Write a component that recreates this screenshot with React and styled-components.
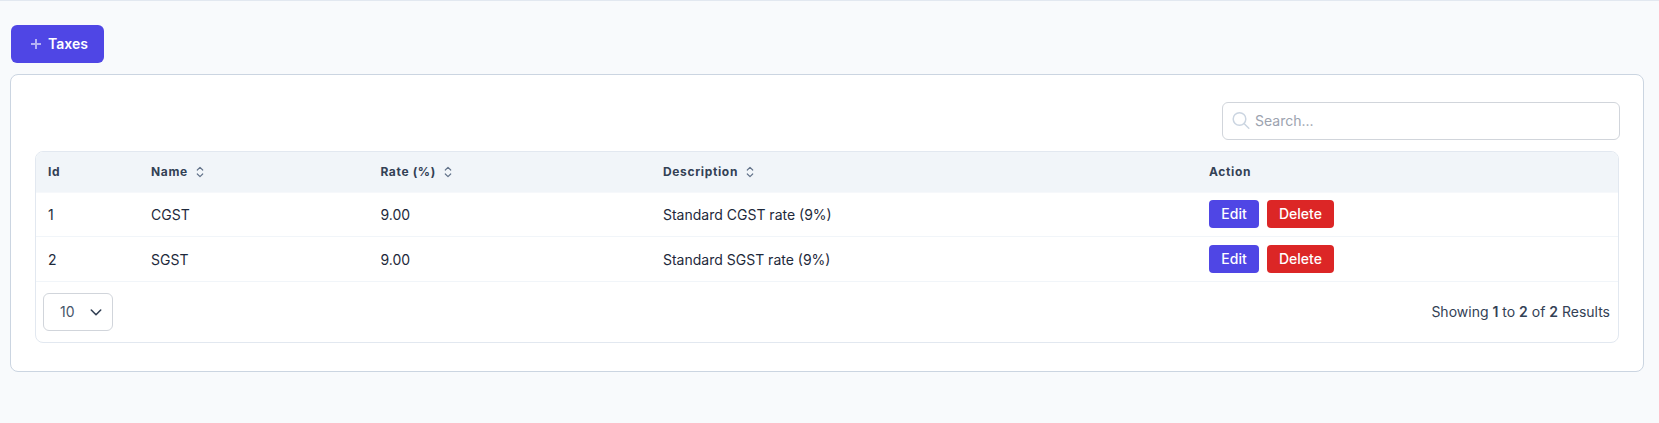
import React from 'react';
import styled, { createGlobalStyle, css } from 'styled-components';

const Global = createGlobalStyle`
  *, *::before, *::after { box-sizing: border-box; }
  body {
    margin: 0;
    background: #f8fafc;
    color: #1e293b;
    font-family: Inter, "Liberation Sans", sans-serif;
    font-size: 14px;
    line-height: 20px;
  }
  button, input { font: inherit; }
`;

const Page = styled.main`
  min-height: 423px;
  padding: 24px 15px 0 10px;
  border-top: 1px solid #e2e8f0;
`;

const AddButton = styled.button`
  display: flex;
  align-items: center;
  gap: 7px;
  width: 93px;
  height: 38px;
  margin: 0 0 11px 1px;
  padding: 0 0 0 20px;
  border: 0;
  border-radius: 6px;
  background: #4f46e5;
  color: #fff;
  font-weight: 570;
`;

const Card = styled.section`
  height: 298px;
  padding: 27px 23px 0 24px;
  border: 1px solid #cbd5e1;
  border-radius: 8px;
  background: #fff;
`;

const Toolbar = styled.div`
  display: flex;
  justify-content: flex-end;
`;

const SearchBox = styled.label`
  display: flex;
  align-items: center;
  gap: 4px;
  width: 398px;
  height: 38px;
  padding: 0 9px 0 8px;
  border: 1px solid #d1d5db;
  border-radius: 6px;
  color: #cbd5e1;
`;

const SearchInput = styled.input`
  flex: 1;
  padding: 0;
  border: 0;
  outline: 0;
  background: transparent;
  &::placeholder { color: #9ca3af; opacity: 1; }
`;

const Panel = styled.div`
  height: 192px;
  margin: 11px 1px 0 0;
  border: 1px solid #e2e8f0;
  border-radius: 8px;
  overflow: hidden;
`;

const grid = css`
  display: grid;
  grid-template-columns: 103px 229.4px 282.6px 546px 1fr;
  align-items: center;
  & > * { padding-left: 12px; }
`;

const HeadRow = styled.div`
  ${grid}
  height: 40px;
  background: #f1f5f9;
  box-shadow: 0 1px #f6f8fb;
  color: #334155;
  font-size: 12px;
  line-height: 16px;
  font-weight: 750;
  letter-spacing: 0.65px;
`;

const HeadCell = styled.div`
  display: flex;
  align-items: center;
  gap: 7px;
`;

const Row = styled.div`
  ${grid}
  height: 45px;
  border-bottom: 1px solid #f1f5f9;
`;

const Cell = styled.div`
  padding-top: 2px;
`;

const Actions = styled.div`
  display: flex;
  gap: 8px;
`;

const ActionButton = styled.button`
  width: ${(p) => (p.$danger ? 67 : 50)}px;
  height: 28px;
  padding: 0;
  border: 0;
  border-radius: 4px;
  background: ${(p) => (p.$danger ? '#dc2626' : '#4f46e5')};
  color: #fff;
  font-weight: 550;
`;

const Footer = styled.div`
  display: flex;
  align-items: center;
  justify-content: space-between;
  height: 60px;
  padding: 0 8px 0 7px;
  color: #334155;
`;

const PageSize = styled.button`
  display: flex;
  align-items: center;
  justify-content: space-between;
  width: 70px;
  height: 38px;
  padding: 0 10px 0 16px;
  border: 1px solid #d1d5db;
  border-radius: 6px;
  background: #fff;
  color: #475569;
`;

const Strong = styled.span`
  font-weight: 600;
`;

const PlusIcon = () => (
  <svg width="10" height="10" viewBox="0 0 10 10" fill="none" stroke="#fff" strokeOpacity="0.58" strokeWidth="2">
    <path d="M0 5H10M5 0V4M5 6V10" />
  </svg>
);

const SearchIcon = () => (
  <svg width="20" height="20" viewBox="0 0 20 20" fill="none" stroke="currentColor" strokeWidth="1.5" strokeLinecap="round">
    <circle cx="8.5" cy="8" r="6.3" />
    <path d="M13 12.5l4.8 4.8" />
  </svg>
);

const SortIcon = () => (
  <svg width="10" height="12" viewBox="0 0 10 12" fill="none" stroke="#64748b" strokeWidth="1.2" strokeLinecap="round" strokeLinejoin="round">
    <path d="M2.3 4L5 1.3 7.7 4M2.3 8L5 10.7 7.7 8" />
  </svg>
);

const ChevronIcon = () => (
  <svg width="12" height="12" viewBox="0 0 12 12" fill="none" stroke="#334155" strokeWidth="1.6" strokeLinecap="round" strokeLinejoin="round">
    <path d="M1.3 4l4.7 4.7L10.7 4" />
  </svg>
);

const columns = [
  { label: 'Id' },
  { label: 'Name', sortable: true },
  { label: 'Rate (%)', sortable: true },
  { label: 'Description', sortable: true },
  { label: 'Action' },
];

const taxes = [
  { id: 1, name: 'CGST', rate: '9.00', description: 'Standard CGST rate (9%)' },
  { id: 2, name: 'SGST', rate: '9.00', description: 'Standard SGST rate (9%)' },
];

export default function App() {
  return (
    <>
      <Global />
      <Page>
        <AddButton><PlusIcon />Taxes</AddButton>
        <Card>
          <Toolbar>
            <SearchBox><SearchIcon /><SearchInput placeholder="Search..." /></SearchBox>
          </Toolbar>
          <Panel>
            <HeadRow>
              {columns.map((c) => (
                <HeadCell key={c.label}>{c.label}{c.sortable && <SortIcon />}</HeadCell>
              ))}
            </HeadRow>
            {taxes.map((t) => (
              <Row key={t.id}>
                <Cell>{t.id}</Cell>
                <Cell>{t.name}</Cell>
                <Cell>{t.rate}</Cell>
                <Cell>{t.description}</Cell>
                <Actions>
                  <ActionButton>Edit</ActionButton>
                  <ActionButton $danger>Delete</ActionButton>
                </Actions>
              </Row>
            ))}
            <Footer>
              <PageSize>10<ChevronIcon /></PageSize>
              <div>Showing <Strong>1</Strong> to <Strong>2</Strong> of <Strong>2</Strong> Results</div>
            </Footer>
          </Panel>
        </Card>
      </Page>
    </>
  );
}
